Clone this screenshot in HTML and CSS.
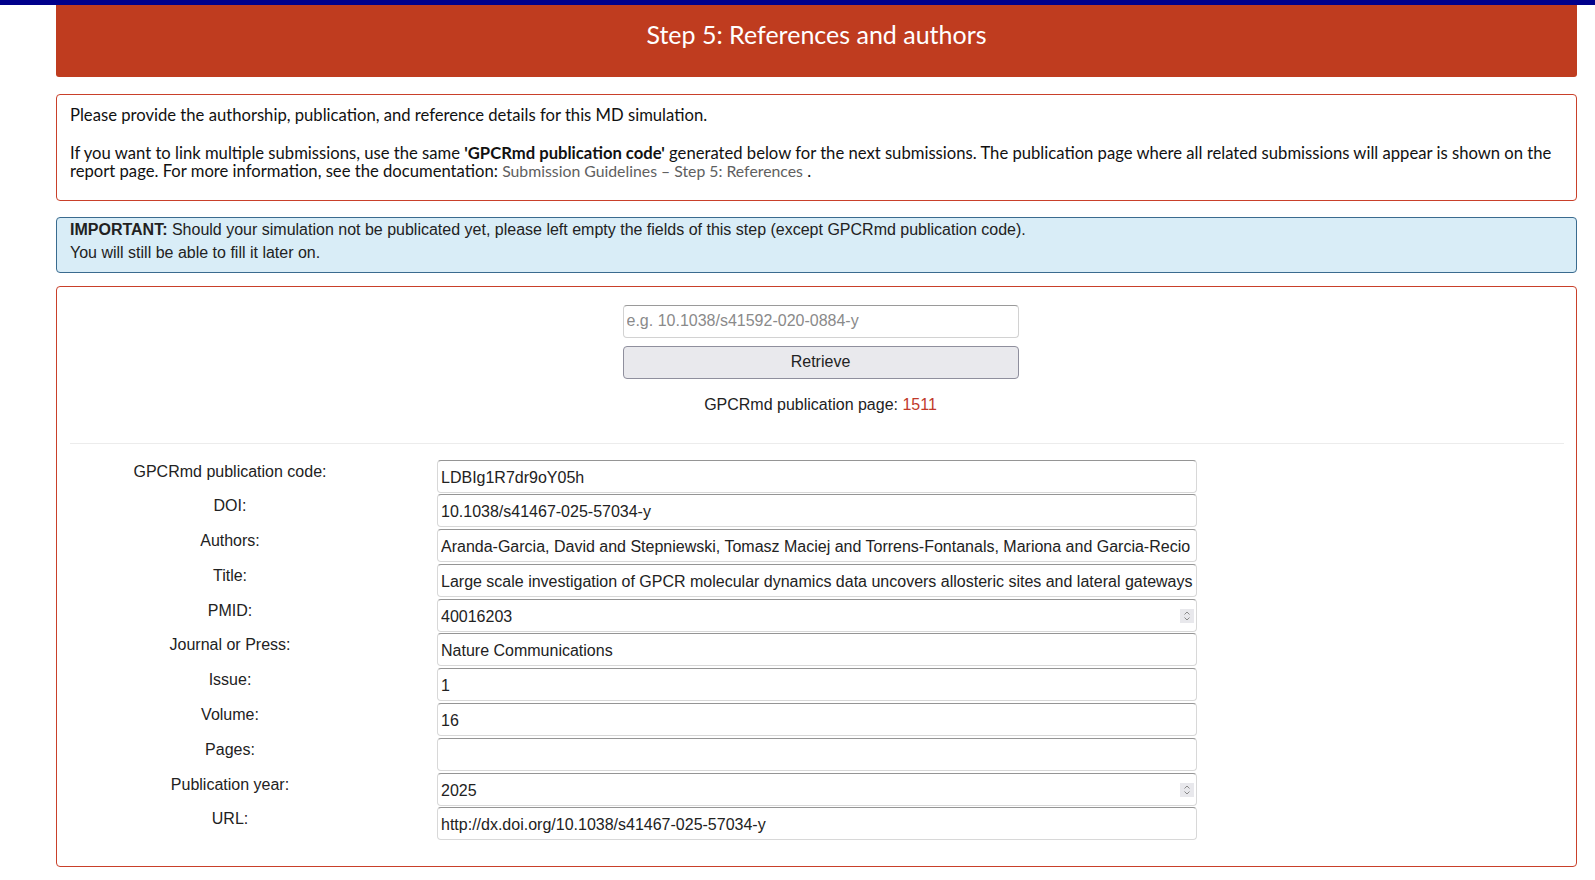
FILE: index.html
```html
<!DOCTYPE html>
<html>
<head>
<meta charset="utf-8">
<title>Step 5: References and authors</title>
<link rel="stylesheet" href="styles.css">
</head>
<body>
<div class="topbar"></div>
<div class="page">
  <div class="step-header">Step 5: References and authors</div>

  <div class="intro">
    <p>Please provide the authorship, publication, and reference details for this MD simulation.</p>
    <p>If you want to link multiple submissions, use the same <b>'GPCRmd publication code'</b> generated below for the next submissions. The publication page where all related submissions will appear is shown on the report page. For more information, see the documentation: <a class="doc-link" href="#">Submission Guidelines – Step 5: References</a> .</p>
  </div>

  <div class="alert">
    <b>IMPORTANT:</b> Should your simulation not be publicated yet, please left empty the fields of this step (except GPCRmd publication code).<br>
    You will still be able to fill it later on.
  </div>

  <div class="form-box">
    <div class="retrieve">
      <input class="doi-search" type="text" placeholder="e.g. 10.1038/s41592-020-0884-y">
      <button class="retrieve-btn" type="button">Retrieve</button>
      <div class="pub-page">GPCRmd publication page: <span class="pub-num">1511</span></div>
    </div>
    <div class="divider"></div>
    <div class="fields">
      <div class="row"><label>GPCRmd publication code:</label><div class="field"><input type="text" value="LDBIg1R7dr9oY05h"></div></div>
      <div class="row"><label>DOI:</label><div class="field"><input type="text" value="10.1038/s41467-025-57034-y"></div></div>
      <div class="row"><label>Authors:</label><div class="field"><input type="text" value="Aranda-Garcia, David and Stepniewski, Tomasz Maciej and Torrens-Fontanals, Mariona and Garcia-Recio"></div></div>
      <div class="row"><label>Title:</label><div class="field"><input type="text" value="Large scale investigation of GPCR molecular dynamics data uncovers allosteric sites and lateral gateways"></div></div>
      <div class="row"><label>PMID:</label><div class="field"><input type="text" value="40016203"><span class="spin"><svg width="8" height="12" viewBox="0 0 8 12"><path d="M1.5 4.5 L4 2 L6.5 4.5 M1.5 7.5 L4 10 L6.5 7.5" fill="none" stroke="#8a8a8a" stroke-width="1"/></svg></span></div></div>
      <div class="row"><label>Journal or Press:</label><div class="field"><input type="text" value="Nature Communications"></div></div>
      <div class="row"><label>Issue:</label><div class="field"><input type="text" value="1"></div></div>
      <div class="row"><label>Volume:</label><div class="field"><input type="text" value="16"></div></div>
      <div class="row"><label>Pages:</label><div class="field"><input type="text" value=""></div></div>
      <div class="row"><label>Publication year:</label><div class="field"><input type="text" value="2025"><span class="spin"><svg width="8" height="12" viewBox="0 0 8 12"><path d="M1.5 4.5 L4 2 L6.5 4.5 M1.5 7.5 L4 10 L6.5 7.5" fill="none" stroke="#8a8a8a" stroke-width="1"/></svg></span></div></div>
      <div class="row"><label>URL:</label><div class="field"><input type="text" value="http://dx.doi.org/10.1038/s41467-025-57034-y"></div></div>
    </div>
  </div>
</div>
</body>
</html>
```

FILE: styles.css
```css
html, body {
  margin: 0;
  padding: 0;
  background: #fff;
}
body {
  font-family: "Liberation Sans", Arial, sans-serif;
  font-size: 16px;
  color: #222;
}
.topbar {
  height: 5px;
  background: #00008b;
}
.page {
  padding: 0 18px 0 56px;
}
.step-header {
  height: 72px;
  background: #bf3c1f;
  color: #fff;
  font-family: Lato, "Open Sans", sans-serif;
  font-size: 25px;
  display: flex;
  align-items: center;
  justify-content: center;
  padding-bottom: 14px;
  box-sizing: border-box;
  border-radius: 0 0 3px 3px;
}
.intro {
  margin-top: 16.5px;
  border: 1px solid #c9402a;
  border-radius: 4px;
  padding: 11.5px 13px 1px 13px;
  font-family: Lato, "Open Sans", sans-serif;
  font-size: 16.65px;
  line-height: 18.4px;
  color: #111;
  height: 107px;
  box-sizing: border-box;
}
.intro p {
  margin: 0 0 19.5px 0;
}
.intro b {
  font-weight: 700;
}
.doc-link {
  color: #606060;
  font-size: 15.8px;
  text-decoration: none;
}
.alert {
  margin-top: 16.5px;
  background: #d9edf7;
  border: 1px solid #3a6b8f;
  border-radius: 4px;
  padding: 0 13px 8px 13px;
  line-height: 23px;
  height: 56px;
  box-sizing: border-box;
  color: #222;
}
.form-box {
  margin-top: 13px;
  border: 1px solid #c9402a;
  border-radius: 4px;
  padding: 17.5px 12px 25px 13px;
  box-sizing: border-box;
  height: 581px;
}
.retrieve {
  display: flex;
  flex-direction: column;
  align-items: center;
  margin-left: 7px;
}
.doi-search {
  width: 396px;
  height: 33px;
  box-sizing: border-box;
  border: 1px solid #d2d2d2;
  border-top-color: #9a9a9a;
  border-radius: 4px;
  padding: 0 3px;
  font-family: "Liberation Sans", Arial, sans-serif;
  font-size: 16px;
  color: #222;
  outline: none;
}
.doi-search::placeholder {
  color: #8a8a8a;
}
.retrieve-btn {
  margin-top: 8px;
  width: 396px;
  height: 33px;
  box-sizing: border-box;
  background: #e9e9ed;
  border: 1px solid #8f8f9d;
  border-radius: 4px;
  font-family: "Liberation Sans", Arial, sans-serif;
  font-size: 16px;
  color: #222;
}
.pub-page {
  margin-top: 16px;
  line-height: 20px;
}
.pub-num {
  color: #c0392b;
}
.divider {
  margin-top: 28.5px;
  border-top: 1px solid #ececec;
}
.fields {
  margin-top: 15.5px;
  display: flex;
  flex-direction: column;
  gap: 1.8px;
}
.row {
  display: flex;
  align-items: flex-start;
}
.row label {
  width: 320px;
  text-align: center;
  line-height: 22px;
  padding-top: 1px;
  color: #222;
}
.field {
  position: relative;
  margin-left: 47px;
  width: 760px;
}
.field input {
  width: 100%;
  height: 33px;
  box-sizing: border-box;
  border: 1px solid #d8d8d8;
  border-top-color: #959595;
  border-radius: 4px;
  padding: 3px 3px 0 3px;
  font-family: "Liberation Sans", Arial, sans-serif;
  font-size: 16px;
  color: #222;
  background: #fff;
  outline: none;
  display: block;
}
.spin {
  position: absolute;
  right: 3px;
  top: 10px;
  width: 14px;
  height: 14px;
  background: #e8e8ec;
  display: flex;
  align-items: center;
  justify-content: center;
}
```
